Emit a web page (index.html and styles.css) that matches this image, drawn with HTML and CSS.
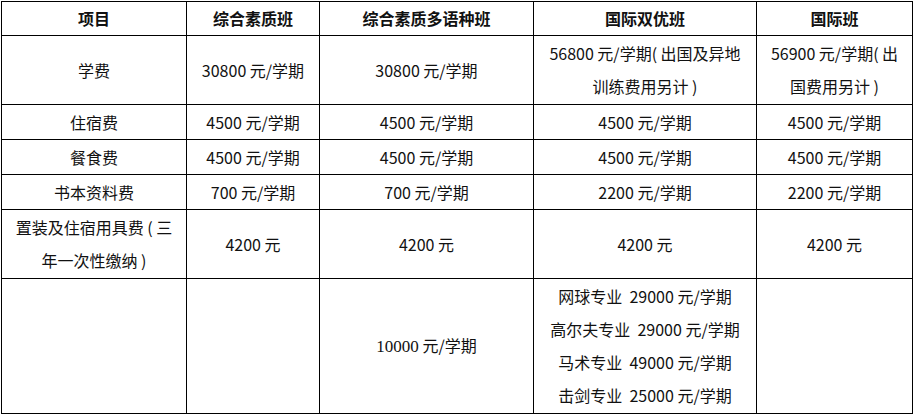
FILE: index.html
```html
<!DOCTYPE html>
<html lang="zh-CN">
<head>
<meta charset="utf-8">
<title>收费标准</title>
<link rel="stylesheet" href="styles.css">
</head>
<body>
<table class="fees">
  <colgroup>
    <col class="c1"><col class="c2"><col class="c3"><col class="c4"><col class="c5">
  </colgroup>
  <tr class="head">
    <th>项目</th><th>综合素质班</th><th>综合素质多语种班</th><th>国际双优班</th><th>国际班</th>
  </tr>
  <tr class="tall">
    <td>学费</td><td>30800 元/学期</td><td>30800 元/学期</td>
    <td>56800 元/学期( 出国及异地<br>训练费用另计 )</td>
    <td>56900 元/学期( 出<br>国费用另计 )</td>
  </tr>
  <tr class="single">
    <td>住宿费</td><td>4500 元/学期</td><td>4500 元/学期</td><td>4500 元/学期</td><td>4500 元/学期</td>
  </tr>
  <tr class="single">
    <td>餐食费</td><td>4500 元/学期</td><td>4500 元/学期</td><td>4500 元/学期</td><td>4500 元/学期</td>
  </tr>
  <tr class="single">
    <td>书本资料费</td><td>700 元/学期</td><td>700 元/学期</td><td>2200 元/学期</td><td>2200 元/学期</td>
  </tr>
  <tr class="tall">
    <td>置装及住宿用具费 ( 三<br>年一次性缴纳 )</td><td>4200 元</td><td>4200 元</td><td>4200 元</td><td>4200 元</td>
  </tr>
  <tr class="last">
    <td></td><td></td><td><span class="serif">10000</span> 元/学期</td>
    <td>网球专业&nbsp; 29000 元/学期<br>高尔夫专业&nbsp; 29000 元/学期<br>马术专业&nbsp; 49000 元/学期<br>击剑专业&nbsp; 25000 元/学期</td>
    <td></td>
  </tr>
</table>
</body>
</html>
```

FILE: styles.css
```css
html, body {
  margin: 0;
  padding: 0;
  background: #ffffff;
}

body {
  padding: 1px 0 0 1px;
  font-family: "Noto Sans CJK SC", "Noto Sans", sans-serif;
  font-size: 16px;
  color: #111111;
}

.fees {
  border-collapse: collapse;
  table-layout: fixed;
  width: 911px;
}

.c1 { width: 185px; }
.c2 { width: 133px; }
.c3 { width: 214px; }
.c4 { width: 223px; }
.c5 { width: 156px; }

.fees th,
.fees td {
  border: 1px solid #000000;
  padding: 0;
  text-align: center;
  vertical-align: middle;
  line-height: 33px;
  font-weight: normal;
  white-space: nowrap;
}

.fees th {
  font-weight: bold;
}

.head { height: 34px; }
.tall { height: 69px; }
.single { height: 35px; }
.last { height: 135px; }

.serif {
  font-family: "Liberation Serif", serif;
  font-size: 17px;
}
```
